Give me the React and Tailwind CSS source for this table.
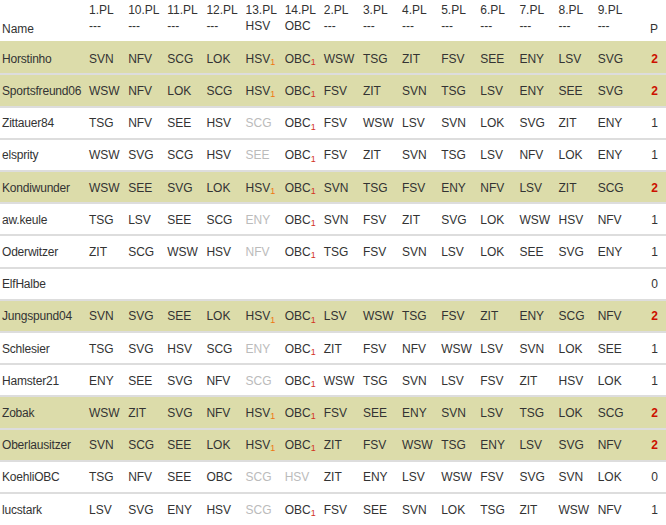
import React from 'react';

// ~ = ausgegraut, ^ = mit tiefgestellter 1
const header = [
  ['1.PL', '---'], ['10.PL', '---'], ['11.PL', '---'], ['12.PL', '---'],
  ['13.PL', 'HSV'], ['14.PL', 'OBC'], ['2.PL', '---'], ['3.PL', '---'],
  ['4.PL', '---'], ['5.PL', '---'], ['6.PL', '---'], ['7.PL', '---'],
  ['8.PL', '---'], ['9.PL', '---'],
];

const rows = [
  { name: 'Horstinho', hl: true, p: 2, tips: 'SVN NFV SCG LOK HSV^ OBC^ WSW TSG ZIT FSV SEE ENY LSV SVG' },
  { name: 'Sportsfreund06', hl: true, p: 2, tips: 'WSW NFV LOK SCG HSV^ OBC^ FSV ZIT SVN TSG LSV ENY SEE SVG' },
  { name: 'Zittauer84', p: 1, tips: 'TSG NFV SEE HSV ~SCG OBC^ FSV WSW LSV SVN LOK SVG ZIT ENY' },
  { name: 'elsprity', p: 1, tips: 'WSW SVG SCG HSV ~SEE OBC^ FSV ZIT SVN TSG LSV NFV LOK ENY' },
  { name: 'Kondiwunder', hl: true, p: 2, tips: 'WSW SEE SVG LOK HSV^ OBC^ SVN TSG FSV ENY NFV LSV ZIT SCG' },
  { name: 'aw.keule', p: 1, tips: 'TSG LSV SEE SCG ~ENY OBC^ SVN FSV ZIT SVG LOK WSW HSV NFV' },
  { name: 'Oderwitzer', p: 1, tips: 'ZIT SCG WSW HSV ~NFV OBC^ TSG FSV SVN LSV LOK SEE SVG ENY' },
  { name: 'ElfHalbe', p: 0, tips: '' },
  { name: 'Jungspund04', hl: true, p: 2, tips: 'SVN SVG SEE LOK HSV^ OBC^ LSV WSW TSG FSV ZIT ENY SCG NFV' },
  { name: 'Schlesier', p: 1, tips: 'TSG SVG HSV SCG ~ENY OBC^ ZIT FSV NFV WSW LSV SVN LOK SEE' },
  { name: 'Hamster21', p: 1, tips: 'ENY SEE SVG NFV ~SCG OBC^ WSW TSG SVN LSV FSV ZIT HSV LOK' },
  { name: 'Zobak', hl: true, p: 2, tips: 'WSW ZIT SVG NFV HSV^ OBC^ FSV SEE ENY SVN LSV TSG LOK SCG' },
  { name: 'Oberlausitzer', hl: true, p: 2, tips: 'SVN SCG SEE LOK HSV^ OBC^ ZIT FSV WSW TSG ENY LSV SVG NFV' },
  { name: 'KoehliOBC', p: 0, tips: 'TSG NFV SEE OBC ~SCG ~HSV ZIT ENY LSV WSW FSV SVG SVN LOK' },
  { name: 'lucstark', p: 1, tips: 'LSV SVG ENY HSV ~SCG OBC^ FSV SEE SVN LOK TSG ZIT WSW NFV' },
];

const Tip = ({ value }) => {
  if (value.startsWith('~')) {
    return <span className="text-[#bbbbbb]">{value.slice(1)}</span>;
  }
  if (value.endsWith('^')) {
    const team = value.slice(0, -1);
    return (
      <span>
        {team}
        <sub className={team === 'HSV' ? 'text-[#ee7711]' : 'text-[#d2331c]'}>1</sub>
      </span>
    );
  }
  return <span>{value}</span>;
};

const App = () => {
  return (
    <div className="w-[666px] bg-white font-['Liberation_Sans',Arial,sans-serif] text-[12px] text-[#333333]">
      <table className="w-full table-fixed border-separate border-spacing-0">
        <colgroup>
          <col className="w-[87px]" />
          {header.map((h) => (
            <col key={h[0]} className="w-[39.14px]" />
          ))}
          <col />
        </colgroup>
        <thead>
          <tr>
            <th className="text-left font-normal align-bottom pl-[2px] pb-[4.7px] leading-[16px]">Name</th>
            {header.map(([a, b]) => (
              <th key={a} className="text-left font-normal align-bottom pl-[2px] pt-[2px] pb-[7.3px] leading-[16px]">
                {a}
                <br />
                {b}
              </th>
            ))}
            <th className="text-right font-normal align-bottom pr-[8px] pb-[4.7px] leading-[16px]">P</th>
          </tr>
        </thead>
        <tbody>
          {rows.map((r, k) => {
            const tips = r.tips ? r.tips.split(' ') : Array(14).fill('');
            const cell = k === 0
              ? 'pt-[9.6px] pb-[5.6px] leading-[17px]'
              : 'border-t-2 border-[#dddddd] pt-[7.6px] pb-[5.6px] leading-[17px]';
            return (
              <tr key={r.name} className={r.hl ? 'bg-[#dcdcaa]' : ''}>
                <td className={`${cell} pl-[2px] whitespace-nowrap tracking-[-0.2px]`}>{r.name}</td>
                {tips.map((t, i) => (
                  <td key={i} className={`${cell} pl-[2px] whitespace-nowrap`}>
                    {t && <Tip value={t} />}
                  </td>
                ))}
                <td className={`${cell} text-right pr-[8px] ${r.p === 2 ? 'text-[#cc1100] font-bold' : ''}`}>
                  {r.p}
                </td>
              </tr>
            );
          })}
        </tbody>
      </table>
    </div>
  );
};

export default App;
